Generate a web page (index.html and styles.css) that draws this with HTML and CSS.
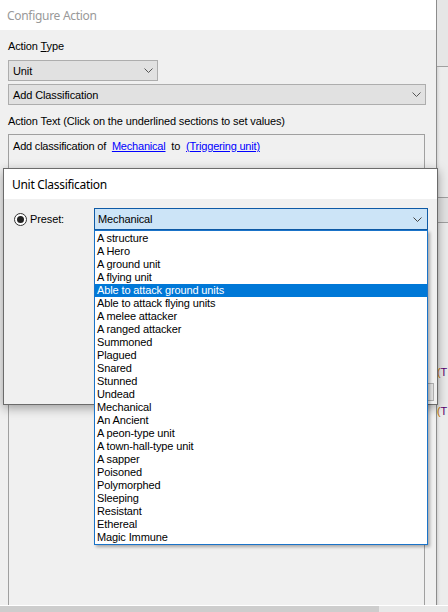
FILE: index.html
```html
<!DOCTYPE html>
<html>
<head>
<meta charset="utf-8">
<link rel="stylesheet" href="styles.css">
</head>
<body>
<div class="desktop">
  <div class="top">
    <div class="main">
      <div class="titlebar">Configure Action</div>
      <div class="content">
        <div class="label">Action <u>T</u>ype</div>
        <div class="combo combo-unit"><span>Unit</span><svg class="chev" width="9" height="5" viewBox="0 0 9 5"><path d="M0.5 0.5 L4.5 4.5 L8.5 0.5" fill="none" stroke="#555" stroke-width="1"/></svg></div>
        <div class="combo combo-action"><span>Add Classification</span><svg class="chev" width="9" height="5" viewBox="0 0 9 5"><path d="M0.5 0.5 L4.5 4.5 L8.5 0.5" fill="none" stroke="#555" stroke-width="1"/></svg></div>
        <div class="label label-text">Action Text (Click on the underlined sections to set values)</div>
        <div class="textbox">
          <div class="textline">Add classification of <a class="link">Mechanical</a> to <a class="link">(Triggering unit)</a></div>
        </div>
      </div>
    </div>
    <div class="behind">
      <div class="behind-top"></div>
      <div class="behind-band"></div>
      <div class="behind-rest">
        <div class="tr tr1"><span class="p1">(</span><span class="p2">T</span></div>
        <div class="tr tr2"><span class="p1">(</span><span class="p2">T</span></div>
      </div>
    </div>
  </div>
  <div class="bottombar"><div class="bar-thumb"></div><div class="bar-rest"></div></div>

  <div class="dialog">
    <div class="dlg-title">Unit Classification</div>
    <div class="dlg-body">
      <div class="preset-row">
        <div class="radio-label"><span class="radio"><span class="dot"></span></span><span>Preset:</span></div>
        <div class="combo-wrap">
          <div class="combo-sel"><span>Mechanical</span><svg class="chev" width="9" height="5" viewBox="0 0 9 5"><path d="M0.5 0.5 L4.5 4.5 L8.5 0.5" fill="none" stroke="#444" stroke-width="1"/></svg></div>
          <ul class="droplist">
            <li>A structure</li>
            <li>A Hero</li>
            <li>A ground unit</li>
            <li>A flying unit</li>
            <li class="sel">Able to attack ground units</li>
            <li>Able to attack flying units</li>
            <li>A melee attacker</li>
            <li>A ranged attacker</li>
            <li>Summoned</li>
            <li>Plagued</li>
            <li>Snared</li>
            <li>Stunned</li>
            <li>Undead</li>
            <li>Mechanical</li>
            <li>An Ancient</li>
            <li>A peon-type unit</li>
            <li>A town-hall-type unit</li>
            <li>A sapper</li>
            <li>Poisoned</li>
            <li>Polymorphed</li>
            <li>Sleeping</li>
            <li>Resistant</li>
            <li>Ethereal</li>
            <li>Magic Immune</li>
          </ul>
        </div>
      </div>
      <div class="dlg-footer"><div class="btn"></div></div>
    </div>
  </div>
</div>
</body>
</html>
```
FILE: styles.css
```css
html, body { margin: 0; padding: 0; }
body {
  width: 448px;
  height: 612px;
  overflow: hidden;
  background: #f0f0f0;
  font-family: "Liberation Sans", Arial, sans-serif;
  font-size: 11px;
  letter-spacing: -0.12px;
  color: #000;
}
.desktop {
  position: relative;
  width: 448px;
  height: 612px;
  display: grid;
  grid-template-rows: 1fr 7px;
}
.top { display: flex; min-height: 0; }
.main {
  width: 436px;
  border-right: 1px solid #8c8c8c;
  display: flex;
  flex-direction: column;
  background: #f0f0f0;
}
.titlebar {
  height: 30px;
  flex: none;
  background: #fff;
  display: flex;
  align-items: center;
  padding-left: 7px;
  font-family: "Noto Sans", "Open Sans", sans-serif;
  font-size: 12px;
  letter-spacing: -0.3px;
  color: #999;
}
.content {
  flex: 1;
  display: flex;
  flex-direction: column;
  padding: 10px 0 0 8px;
  min-height: 0;
}
.label { line-height: 13px; height: 13px; white-space: nowrap; }
.label u { text-decoration: underline; }
.combo {
  box-sizing: border-box;
  height: 21px;
  border: 1px solid #adadad;
  background: #e1e1e1;
  display: flex;
  align-items: center;
  justify-content: space-between;
  padding: 0 4px 0 4px;
}
.combo-unit { width: 150px; margin-top: 7px; }
.combo-action { width: 418px; margin-top: 3px; }
.label-text { margin-top: 10px; }
.textbox {
  margin-top: 6px;
  width: 417px;
  flex: 1;
  box-sizing: border-box;
  border: 1px solid #a0a0a0;
  border-bottom: none;
  padding: 5px 4px 0 4px;
}
.textline { line-height: 13px; white-space: nowrap; letter-spacing: -0.2px; }
.link { color: #0000ff; text-decoration: underline; margin: 0 3px; }
.behind {
  flex: 1;
  display: flex;
  flex-direction: column;
  background: #ececec;
  box-shadow: inset 3px 0 3px -2px rgba(0,0,0,0.12);
}
.behind-top { height: 66px; border-bottom: 1px solid #a0a0a0; background: #e6e6e6; }
.behind-band { margin-top: 130px; height: 24px; border-top: 1px solid #a0a0a0; border-bottom: 1px solid #a0a0a0; background: #e2e2e2; }
.behind-rest { flex: 1; padding-left: 0; }
.tr { line-height: 13px; white-space: nowrap; font-size: 11px; }
.tr1 { margin-top: 143px; }
.tr2 { margin-top: 26px; }
.p1 { color: #c07000; }
.p2 { color: #5a0070; }
.bottombar {
  display: flex;
  border-top: 1px solid #fff;
}
.bar-thumb { width: 379px; background: #cdcdcd; }
.bar-rest { flex: 1; background: #e8e8e8; }

.dialog {
  position: absolute;
  left: 3px;
  top: 168px;
  width: 435px;
  height: 237px;
  box-sizing: border-box;
  border: 1px solid #6b6b6b;
  background: #f0f0f0;
  box-shadow: 0 3px 10px rgba(0,0,0,0.35);
  display: flex;
  flex-direction: column;
}
.dlg-title {
  height: 30px;
  flex: none;
  background: #fff;
  display: flex;
  align-items: center;
  padding-left: 8px;
  font-family: "Noto Sans", "Open Sans", sans-serif;
  font-size: 12px;
  letter-spacing: -0.3px;
  color: #000;
}
.dlg-body {
  flex: 1;
  display: flex;
  flex-direction: column;
  justify-content: space-between;
  padding: 9px 3px 3px 10px;
}
.preset-row { display: flex; align-items: flex-start; }
.radio-label {
  width: 80px;
  height: 22px;
  display: flex;
  align-items: center;
  gap: 3px;
}
.radio {
  box-sizing: border-box;
  width: 13px;
  height: 13px;
  border: 1px solid #333;
  border-radius: 50%;
  background: #fff;
  display: flex;
  align-items: center;
  justify-content: center;
}
.dot { width: 7px; height: 7px; border-radius: 50%; background: #222; }
.combo-wrap { position: relative; width: 334px; }
.combo-sel {
  box-sizing: border-box;
  height: 22px;
  border: 1px solid #0e5aa6;
  background: #cce4f7;
  display: flex;
  align-items: center;
  justify-content: space-between;
  padding: 0 5px 0 3px;
}
.droplist {
  position: absolute;
  left: 0;
  top: 22px;
  width: 334px;
  box-sizing: border-box;
  margin: 0;
  padding: 1px 0 0 0;
  list-style: none;
  background: #fff;
  border: 1px solid #1a73c8;
  box-shadow: 2px 2px 3px rgba(0,0,0,0.3);
  z-index: 2;
}
.droplist li {
  height: 13px;
  line-height: 13px;
  padding-left: 2px;
  white-space: nowrap;
}
.droplist li.sel { background: #0078d7; color: #fff; }
.dlg-footer { display: flex; justify-content: flex-end; }
.btn {
  width: 75px;
  height: 18px;
  box-sizing: border-box;
  border: 1px solid #adadad;
  background: #e1e1e1;
}
```
